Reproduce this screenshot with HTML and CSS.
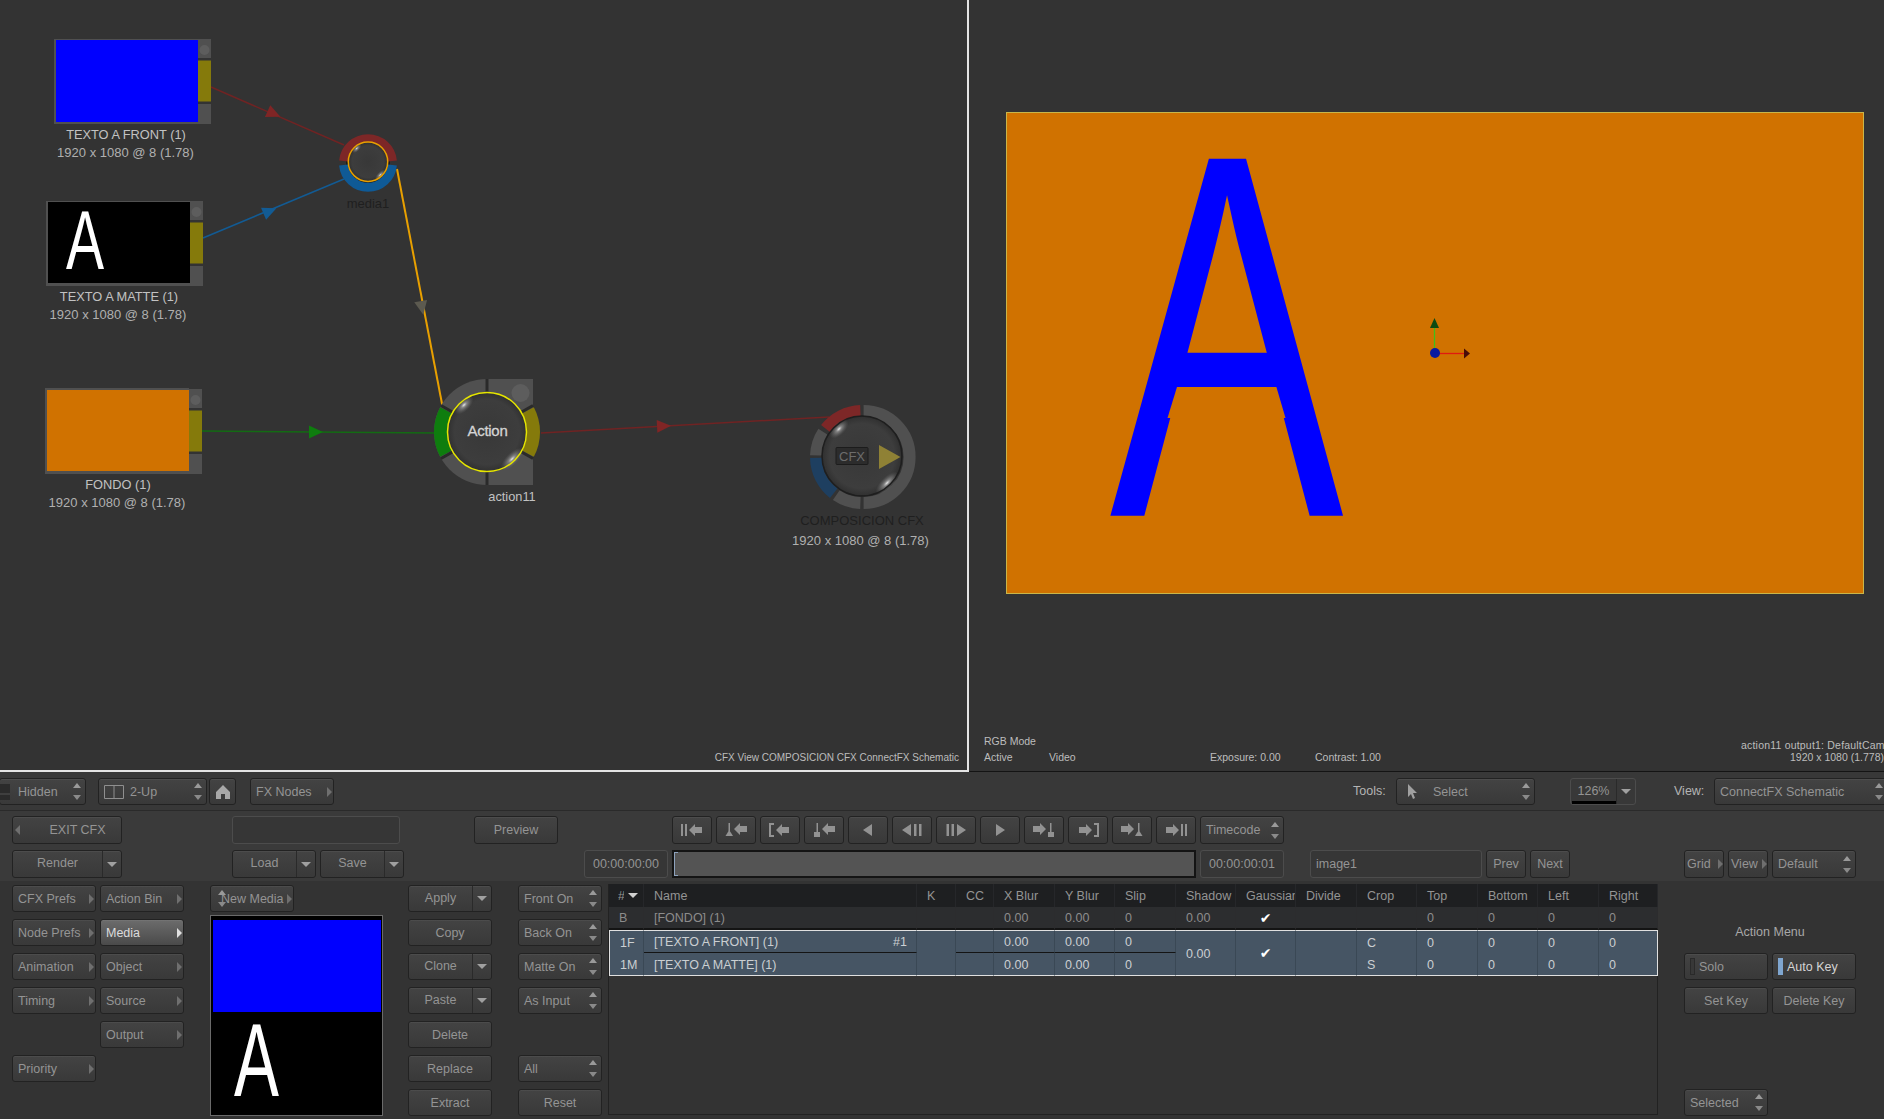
FILE: index.html
```html
<!DOCTYPE html>
<html lang="es">
<head>
    <meta charset="UTF-8">
    <title>ConnectFX Schematic</title>
    <link rel="stylesheet" href="styles.css">
</head>
<body>

<!-- shared drawings -->
<svg class="defs" width="0" height="0">
    <defs>
        <radialGradient id="ballFill" cx="50%" cy="50%" r="52%">
            <stop offset="0" stop-color="#383838"/>
            <stop offset="0.78" stop-color="#3d3d3d"/>
            <stop offset="0.93" stop-color="#323232"/>
            <stop offset="1" stop-color="#1c1c1c"/>
        </radialGradient>
        <radialGradient id="shine">
            <stop offset="0" stop-color="#f4f4f4" stop-opacity="0.95"/>
            <stop offset="0.3" stop-color="#b0b0b0" stop-opacity="0.6"/>
            <stop offset="1" stop-color="#707070" stop-opacity="0"/>
        </radialGradient>
        <g id="ball">
            <circle r="40" fill="url(#ballFill)"/>
            <ellipse cx="-23" cy="-27" rx="12" ry="6" fill="url(#shine)" transform="rotate(-45 -23 -27)"/>
            <ellipse cx="25" cy="27" rx="15" ry="6" fill="url(#shine)" transform="rotate(-45 25 27)"/>
        </g>
        <g id="thumbTab">
            <rect width="13" height="19" fill="#505050"/>
            <circle cx="6.5" cy="11" r="5" fill="#5d5d5d"/>
            <rect y="21.5" width="13" height="41" fill="#857a0b"/>
            <rect y="65" width="13" height="20" fill="#505050"/>
        </g>
    </defs>
    <symbol id="i-bars" viewBox="0 0 26 14">
        <rect x="2" y="1" width="2" height="12"/><rect x="6" y="1" width="2" height="12"/>
        <polygon points="10,7 16,1 16,4 23,4 23,10 16,10 16,13"/>
    </symbol>
    <symbol id="i-cone" viewBox="0 0 26 14">
        <rect x="5.5" y="0" width="1.5" height="8"/><polygon points="6.2,7 10,13 2.5,13"/>
        <polygon points="11,6 17,0 17,3 24,3 24,9 17,9 17,12"/>
    </symbol>
    <symbol id="i-bracket" viewBox="0 0 26 14">
        <path d="M7 1H3V13H7" fill="none" stroke="currentColor" stroke-width="2"/>
        <polygon points="9,7 15,1 15,4 22,4 22,10 15,10 15,13"/>
    </symbol>
    <symbol id="i-broom" viewBox="0 0 26 14">
        <rect x="5.5" y="0" width="1.5" height="9"/><rect x="3" y="9" width="6" height="5"/>
        <polygon points="11,6 17,0 17,3 24,3 24,9 17,9 17,12"/>
    </symbol>
    <symbol id="i-tri" viewBox="0 0 26 14">
        <polygon points="8,7 17,1 17,13"/>
    </symbol>
    <symbol id="i-tribars" viewBox="0 0 26 14">
        <polygon points="3,7 12,1 12,13"/>
        <rect x="15" y="1" width="2.5" height="12"/><rect x="20" y="1" width="2.5" height="12"/>
    </symbol>
</svg>

<div class="views">
    <div class="schematic">
        <svg class="canvas" width="967" height="770" viewBox="0 0 967 770">
            <!-- links -->
            <line x1="211" y1="87" x2="344" y2="145" stroke="#702323" stroke-width="1.5"/>
            <polygon points="-7,-6.5 7,0 -7,6.5" fill="#802525" transform="translate(274 114) rotate(24)"/>
            <line x1="203" y1="238" x2="344" y2="179" stroke="#125b94" stroke-width="1.5"/>
            <polygon points="-7,-6.5 7,0 -7,6.5" fill="#125b94" transform="translate(270 211) rotate(-23)"/>
            <line x1="397" y1="169" x2="443" y2="409" stroke="#e8a000" stroke-width="2"/>
            <polygon points="-7,-6.5 7,0 -7,6.5" fill="#5c5a50" transform="translate(422 308) rotate(79)"/>
            <line x1="202" y1="431" x2="436" y2="433" stroke="#136b13" stroke-width="1.5"/>
            <polygon points="-7,-6.5 7,0 -7,6.5" fill="#0e7d0e" transform="translate(316 432)"/>
            <line x1="541" y1="433" x2="829" y2="417" stroke="#702323" stroke-width="1.5"/>
            <polygon points="-7,-6.5 7,0 -7,6.5" fill="#802525" transform="translate(664 426) rotate(-3)"/>

            <!-- clip nodes -->
            <rect x="54" y="39" width="144" height="85" fill="#505050"/>
            <rect x="56" y="40" width="142" height="82" fill="#0000ff"/>
            <use href="#thumbTab" x="198" y="39"/>
            <text class="node-name" x="126" y="139">TEXTO A FRONT (1)</text>
            <text class="node-info" x="125.500" y="157">1920 x 1080 @ 8 (1.78)</text>

            <rect x="46" y="201" width="144" height="85" fill="#505050"/>
            <rect x="48" y="202" width="142" height="81" fill="#000000"/>
            <text class="glyph" fill="#ffffff" font-size="84" transform="translate(85 268.6) scale(0.68 1)">A</text>
            <use href="#thumbTab" x="190" y="201"/>
            <text class="node-name" x="119" y="301">TEXTO A MATTE (1)</text>
            <text class="node-info" x="118" y="319">1920 x 1080 @ 8 (1.78)</text>

            <rect x="45" y="388" width="144" height="86" fill="#505050"/>
            <rect x="47" y="390" width="142" height="81" fill="#d07200"/>
            <use href="#thumbTab" x="189" y="389"/>
            <text class="node-name" x="118" y="488.500">FONDO (1)</text>
            <text class="node-info" x="117" y="507">1920 x 1080 @ 8 (1.78)</text>

            <!-- media node -->
            <circle cx="368" cy="163" r="22" fill="#1c1c1c"/>
            <path d="M343.6 161 A24.5 24.5 0 0 1 392.4 161" fill="none" stroke="#7d2727" stroke-width="9"/>
            <path d="M343.6 165 A24.5 24.5 0 0 0 392.4 165" fill="none" stroke="#0f5a96" stroke-width="9"/>
            <use href="#ball" transform="translate(368 161.7) scale(0.49)"/>
            <circle cx="368" cy="161.7" r="19.7" fill="none" stroke="#e8a000" stroke-width="1.5"/>
            <text class="node-dim" x="368" y="208">media1</text>

            <!-- action node -->
            <path d="M487 379 A53 53 0 0 0 434 432 A53 53 0 0 0 487 485 H533 V379 Z" fill="#505050"/>
            <circle cx="520.5" cy="393" r="9" fill="#5d5d5d"/>
            <path d="M445.9 410.2 A46.5 46.5 0 0 0 445.9 453.8" fill="none" stroke="#0e7d0e" stroke-width="13"/>
            <path d="M528.1 410.2 A46.5 46.5 0 0 1 528.1 453.8" fill="none" stroke="#857a0b" stroke-width="13"/>
            <g stroke="#2a2a2a" stroke-width="3">
                <line x1="487" y1="379" x2="487" y2="392"/>
                <line x1="487" y1="472" x2="487" y2="485"/>
                <line x1="452.4" y1="412" x2="441" y2="405.5"/>
                <line x1="452.4" y1="452" x2="441" y2="458.5"/>
                <line x1="521.6" y1="412" x2="533" y2="405.5"/>
                <line x1="521.6" y1="452" x2="533" y2="458.5"/>
            </g>
            <use href="#ball" transform="translate(487 432)"/>
            <circle cx="487" cy="432" r="39.5" fill="none" stroke="#e6e600" stroke-width="1.5"/>
            <text class="ball-label" x="487.500" y="436">Action</text>
            <text class="node-name" x="512" y="501">action11</text>

            <!-- output node -->
            <g fill="none" stroke-width="12">
                <path d="M860.4 411 A46 46 0 0 0 825.8 428.7" stroke="#7d2727"/>
                <path d="M823.4 431.9 A46 46 0 0 0 816 455.4" stroke="#505050"/>
                <path d="M816 457.8 A46 46 0 0 0 833.7 493.2" stroke="#1e3f60"/>
                <path d="M836.3 495.1 A46 46 0 0 0 860.4 503" stroke="#505050"/>
                <path d="M863.6 503 A46 46 0 0 0 863.6 411" stroke="#505050"/>
            </g>
            <use href="#ball" transform="translate(862 456)"/>
            <circle cx="862" cy="456" r="40" fill="none" stroke="#1e1e1e" stroke-width="1.5"/>
            <rect class="cfx-box" x="836" y="447.5" width="32" height="17" rx="1"/>
            <text class="cfx-label" x="852" y="460.5">CFX</text>
            <polygon points="879,445 900.5,457 879,469" fill="#8f8135"/>
            <text class="node-dim" x="862" y="525">COMPOSICION CFX</text>
            <text class="node-info" x="860.500" y="545">1920 x 1080 @ 8 (1.78)</text>

            <text class="view-note small end" x="959" y="761">CFX View COMPOSICION CFX ConnectFX Schematic</text>
        </svg>
    </div>
    <div class="viewer">
        <svg class="canvas" width="915" height="771" viewBox="969 0 915 771">
            <rect x="1006.5" y="112.5" width="857" height="481" fill="#d07200" stroke="#c9b64a"/>
            <text class="glyph" fill="#0000ff" font-size="519" transform="translate(1226.7 515.7) scale(0.676 1)">A</text>
            <!-- the app's crossbar sits higher than this font's -->
            <polygon points="1181,352.7 1272,352.7 1284,380 1169,380" fill="#0000ff"/>
            <polygon points="1177,387 1276.4,387 1285.5,418 1167.500,418" fill="#d07200"/>

            <line x1="1434.5" y1="353" x2="1434.5" y2="322" stroke="#3fc01a" stroke-width="1.3"/>
            <polygon points="1430,328 1439,328 1434.5,318" fill="#0d4a12"/>
            <line x1="1435" y1="353.5" x2="1466" y2="353.5" stroke="#e01a10" stroke-width="1.3"/>
            <polygon points="1464,348.5 1464,358.5 1470,353.5" fill="#4a0d08"/>
            <ellipse cx="1435" cy="353" rx="5" ry="5" fill="#0a1aa0"/>

            <text class="view-note" x="984" y="745">RGB Mode</text>
            <text class="view-note" x="984" y="761">Active</text>
            <text class="view-note" x="1049" y="761">Video</text>
            <text class="view-note" x="1210" y="761">Exposure: 0.00</text>
            <text class="view-note" x="1315" y="761">Contrast: 1.00</text>
            <text class="view-note wide" x="1741" y="749">action11 output1: DefaultCam</text>
            <text class="view-note end" x="1884" y="761">1920 x 1080 (1.778)</text>
        </svg>
    </div>
</div>

<div class="toolbar">
    <div class="btn spin hidden-mode"><b class="pane-mark"></b><span>Hidden</span><i class="updown"></i></div>
    <div class="btn spin two-up">
        <svg class="pane-icon" width="20" height="14" viewBox="0 0 20 14"><path d="M.5.5h19v13H.5zM10 .5v13" fill="none" stroke="#8f8f8f"/></svg>
        <span>2-Up</span><i class="updown"></i>
    </div>
    <div class="btn home">
        <svg width="14" height="14" viewBox="0 0 14 14"><path d="M7 0 14 7V14H9V9H5V14H0V7Z" fill="#a8a8a8"/></svg>
    </div>
    <div class="btn menu fx-nodes"><span>FX Nodes</span><i class="arrow-r"></i></div>
    <span class="tool-label tools-label">Tools:</span>
    <div class="btn spin tool-select">
        <svg class="cursor" width="10" height="15" viewBox="0 0 10 15"><path d="M0 0V13L3 10 5 15 7 14 5 9H9Z" fill="#a0a0a0"/></svg>
        <span>Select</span><i class="updown"></i>
    </div>
    <div class="btn split zoom-level"><span class="label">126%</span><i class="drop"></i></div>
    <span class="tool-label view-label">View:</span>
    <div class="btn spin view-select"><span>ConnectFX Schematic</span><i class="updown"></i></div>
</div>

<div class="band">
    <div class="row">
        <div class="btn exit"><i class="arrow-l"></i><span>EXIT CFX</span></div>
        <div class="field name-field"></div>
        <div class="btn preview-btn">Preview</div>
        <div class="transport">
            <div class="btn tp"><svg class="ico"><use href="#i-bars"/></svg></div>
            <div class="btn tp"><svg class="ico"><use href="#i-cone"/></svg></div>
            <div class="btn tp"><svg class="ico"><use href="#i-bracket"/></svg></div>
            <div class="btn tp"><svg class="ico"><use href="#i-broom"/></svg></div>
            <div class="btn tp"><svg class="ico"><use href="#i-tri"/></svg></div>
            <div class="btn tp"><svg class="ico"><use href="#i-tribars"/></svg></div>
            <div class="btn tp"><svg class="ico flip"><use href="#i-tribars"/></svg></div>
            <div class="btn tp"><svg class="ico flip"><use href="#i-tri"/></svg></div>
            <div class="btn tp"><svg class="ico flip"><use href="#i-broom"/></svg></div>
            <div class="btn tp"><svg class="ico flip"><use href="#i-bracket"/></svg></div>
            <div class="btn tp"><svg class="ico flip"><use href="#i-cone"/></svg></div>
            <div class="btn tp"><svg class="ico flip"><use href="#i-bars"/></svg></div>
        </div>
        <div class="btn spin timecode"><span>Timecode</span><i class="updown"></i></div>
    </div>
    <div class="row">
        <div class="btn split render"><span class="label">Render</span><i class="drop"></i></div>
        <div class="btn split load"><span class="label">Load</span><i class="drop"></i></div>
        <div class="btn split save"><span class="label">Save</span><i class="drop"></i></div>
        <div class="field time time-in">00:00:00:00</div>
        <div class="scrub"><b class="in-mark"></b></div>
        <div class="field time time-out">00:00:00:01</div>
        <div class="field image-name">image1</div>
        <div class="btn prev">Prev</div>
        <div class="btn next">Next</div>
        <div class="btn menu tight grid-btn"><span>Grid</span><i class="arrow-r"></i></div>
        <div class="btn menu tight view-btn"><span>View</span><i class="arrow-r"></i></div>
        <div class="btn spin default-btn"><span>Default</span><i class="updown"></i></div>
    </div>
</div>

<div class="lower">
    <div class="col col-a">
        <div class="btn menu"><span>CFX Prefs</span><i class="arrow-r"></i></div>
        <div class="btn menu"><span>Node Prefs</span><i class="arrow-r"></i></div>
        <div class="btn menu"><span>Animation</span><i class="arrow-r"></i></div>
        <div class="btn menu"><span>Timing</span><i class="arrow-r"></i></div>
        <div class="slot"></div>
        <div class="btn menu"><span>Priority</span><i class="arrow-r"></i></div>
    </div>
    <div class="col col-b">
        <div class="btn menu"><span>Action Bin</span><i class="arrow-r"></i></div>
        <div class="btn menu active"><span>Media</span><i class="arrow-r"></i></div>
        <div class="btn menu"><span>Object</span><i class="arrow-r"></i></div>
        <div class="btn menu"><span>Source</span><i class="arrow-r"></i></div>
        <div class="btn menu"><span>Output</span><i class="arrow-r"></i></div>
    </div>
    <div class="col-media">
        <div class="btn menu new-media"><i class="updown left"></i><span>New Media</span><i class="arrow-r"></i></div>
        <div class="media-preview">
            <div class="front-swatch"></div>
            <svg class="matte-swatch" width="169" height="103" viewBox="0 0 169 103">
                <text class="glyph" fill="#ffffff" font-size="103" transform="translate(43.5 84) scale(0.655 1)">A</text>
            </svg>
        </div>
    </div>
    <div class="col col-ops">
        <div class="btn split"><span class="label">Apply</span><i class="drop"></i></div>
        <div class="btn">Copy</div>
        <div class="btn split"><span class="label">Clone</span><i class="drop"></i></div>
        <div class="btn split"><span class="label">Paste</span><i class="drop"></i></div>
        <div class="btn">Delete</div>
        <div class="btn">Replace</div>
        <div class="btn">Extract</div>
    </div>
    <div class="col col-layer">
        <div class="btn spin"><span>Front On</span><i class="updown"></i></div>
        <div class="btn spin"><span>Back On</span><i class="updown"></i></div>
        <div class="btn spin"><span>Matte On</span><i class="updown"></i></div>
        <div class="btn spin"><span>As Input</span><i class="updown"></i></div>
        <div class="slot"></div>
        <div class="btn spin"><span>All</span><i class="updown"></i></div>
        <div class="btn">Reset</div>
    </div>
    <div class="layers">
        <table>
            <colgroup>
                <col class="c-id"><col class="c-name"><col class="c-k"><col class="c-cc">
                <col class="c-wide"><col class="c-mid"><col class="c-wide"><col class="c-mid"><col class="c-mid">
                <col class="c-wide"><col class="c-mid"><col class="c-wide"><col class="c-mid"><col class="c-wide"><col class="c-last">
            </colgroup>
            <thead>
                <tr>
                    <th><span class="sharp">#</span><i class="drop sort"></i></th>
                    <th>Name</th><th>K</th><th>CC</th><th>X Blur</th><th>Y Blur</th><th>Slip</th><th>Shadow</th>
                    <th>Gaussian</th><th>Divide</th><th>Crop</th><th>Top</th><th>Bottom</th><th>Left</th><th>Right</th>
                </tr>
            </thead>
            <tbody>
                <tr class="back">
                    <td>B</td><td>[FONDO] (1)</td><td></td><td></td><td>0.00</td><td>0.00</td><td>0</td><td>0.00</td>
                    <td class="check">✔</td><td></td><td></td><td>0</td><td>0</td><td>0</td><td>0</td>
                </tr>
                <tr class="sel first">
                    <td>1F</td><td class="rule"><span class="tag">#1</span>[TEXTO A FRONT] (1)</td>
                    <td rowspan="2"></td><td class="rule"></td><td class="rule">0.00</td><td class="rule">0.00</td><td class="rule">0</td>
                    <td rowspan="2">0.00</td><td rowspan="2" class="check">✔</td><td rowspan="2"></td>
                    <td>C</td><td>0</td><td>0</td><td>0</td><td>0</td>
                </tr>
                <tr class="sel second">
                    <td>1M</td><td>[TEXTO A MATTE] (1)</td><td></td><td>0.00</td><td>0.00</td><td>0</td>
                    <td>S</td><td>0</td><td>0</td><td>0</td><td>0</td>
                </tr>
            </tbody>
        </table>
    </div>
    <div class="actions">
        <div class="action-title">Action Menu</div>
        <div class="btn led-btn"><b class="led"></b><span>Solo</span></div>
        <div class="btn led-btn on"><b class="led"></b><span>Auto Key</span></div>
        <div class="btn key-btn">Set Key</div>
        <div class="btn key-btn">Delete Key</div>
        <div class="btn spin selected-btn"><span>Selected</span><i class="updown"></i></div>
    </div>
</div>

</body>
</html>
```
FILE: styles.css
```css
* {
    box-sizing: border-box;
}

html, body {
    margin: 0;
    width: 1884px;
    height: 1119px;
    overflow: hidden;
}

body {
    background-color: #333333;
    color: #949494;
    font-family: "Liberation Sans", Arial, sans-serif;
    font-size: 12.5px;
}

.defs {
    position: absolute;
}

.canvas {
    display: block;
}

/* top views */
.views {
    display: flex;
    height: 772px;
    background-color: #333333;
}

.schematic {
    width: 969px;
    height: 772px;
    border-right: 2px solid #e4e4e4;
    border-bottom: 2px solid #e4e4e4;
}

.viewer {
    width: 915px;
    height: 772px;
    border-bottom: 1px solid #141414;
}

.node-name, .node-info, .node-dim, .ball-label, .cfx-label {
    font-family: "Liberation Sans", Arial, sans-serif;
    text-anchor: middle;
}

.node-name {
    font-size: 12.8px;
    fill: #c2c2c2;
}

.node-info {
    font-size: 13px;
    fill: #b0b0b0;
}

.node-dim {
    font-size: 13px;
    fill: #1f1f1f;
}

.ball-label {
    font-size: 15px;
    fill: #d4d4d4;
    stroke: #d4d4d4;
    stroke-width: 0.3px;
    letter-spacing: -0.3px;
}

.cfx-box {
    fill: #2c2c2c;
    stroke: #1c1c1c;
}

.cfx-label {
    font-size: 13px;
    fill: #6c6c6c;
}

.glyph {
    font-family: "Liberation Sans", Arial, sans-serif;
    text-anchor: middle;
}

.view-note {
    font-family: "Liberation Sans", Arial, sans-serif;
    font-size: 10.5px;
    fill: #bdbdbd;
}

.view-note.small {
    font-size: 10px;
}

.view-note.wide {
    letter-spacing: 0.2px;
}

.view-note.end {
    text-anchor: end;
}

/* buttons */
.btn {
    display: flex;
    flex-shrink: 0;
    align-items: center;
    justify-content: center;
    height: 27px;
    border: 1px solid #222222;
    border-radius: 3px;
    background: linear-gradient(#434343, #393939);
    box-shadow: inset 0 1px 0 rgba(255, 255, 255, 0.05);
    white-space: nowrap;
}

.btn.menu, .btn.spin, .btn.led-btn {
    justify-content: flex-start;
    padding-left: 5px;
}

.btn.menu.tight {
    padding-left: 2px;
}

.btn.active {
    background: linear-gradient(#6c6c6c, #4a4a4a);
    color: #dcdcdc;
}

.btn.active .arrow-r {
    border-left-color: #e0e0e0;
}

.arrow-r, .arrow-l {
    width: 0;
    height: 0;
    border-top: 5px solid transparent;
    border-bottom: 5px solid transparent;
}

.arrow-r {
    margin-left: auto;
    margin-right: 1px;
    border-left: 5px solid #6f6f6f;
}

.btn.menu.tight .arrow-r {
    margin-right: 0;
}

.arrow-l {
    margin-right: auto;
    margin-left: 2px;
    border-right: 5px solid #6f6f6f;
}

.updown {
    position: relative;
    flex-shrink: 0;
    width: 9px;
    height: 17px;
    margin-left: auto;
    margin-right: 3px;
}

.updown::before, .updown::after {
    content: "";
    position: absolute;
    left: 0;
    border-left: 4.5px solid transparent;
    border-right: 4.5px solid transparent;
}

.updown::before {
    top: 0;
    border-bottom: 5px solid #9a9a9a;
}

.updown::after {
    bottom: 0;
    border-top: 5px solid #8a8a8a;
}

.updown.left {
    margin: 0 -6px 0 2px;
}

.btn.split {
    padding: 0;
}

.btn.split .label {
    flex: 1;
    align-self: stretch;
    margin-right: 4px;
    border-right: 1px solid #2a2a2a;
    line-height: 25px;
    text-align: center;
}

.drop {
    display: block;
    width: 0;
    height: 0;
    border-top: 5px solid #a0a0a0;
    border-left: 5px solid transparent;
    border-right: 5px solid transparent;
}

.btn.split .drop {
    box-sizing: content-box;
    margin: 0 4px 0 0;
}

.field {
    flex-shrink: 0;
    height: 28px;
    border: 1px solid #4c4c4c;
    border-radius: 3px;
    background-color: #363636;
    line-height: 27px;
    padding-left: 5px;
}

/* first toolbar */
.toolbar {
    display: flex;
    height: 39px;
    padding-top: 6px;
    background-color: #383838;
    border-bottom: 1px solid #2a2a2a;
}

.hidden-mode {
    width: 87px;
    margin-left: -1px;
}

.pane-mark {
    width: 10px;
    height: 16px;
    margin: 0 8px 0 -5px;
    background: linear-gradient(#2b2b2b 58%, #3f3f3f 58%, #3f3f3f 66%, #2b2b2b 66%);
}

.two-up {
    width: 109px;
    margin-left: 12px;
}

.pane-icon {
    margin: 0 6px 0 0;
}

.home {
    width: 27px;
    margin-left: 2px;
}

.fx-nodes {
    width: 84px;
    margin-left: 14px;
}

.tool-label {
    flex-shrink: 0;
    line-height: 27px;
    color: #b4b4b4;
}

.tools-label {
    width: 43px;
    margin-left: 1019px;
}

.tool-select {
    width: 139px;
}

.cursor {
    margin: 0 15px 0 6px;
}

.zoom-level {
    position: relative;
    width: 66px;
    margin-left: 35px;
    border-color: #4c4c4c;
    background: #383838;
    box-shadow: none;
}

.zoom-level::after {
    content: "";
    position: absolute;
    left: 1px;
    bottom: 0;
    width: 44px;
    height: 3px;
    background-color: #000000;
}

.view-label {
    width: 40px;
    margin-left: 38px;
}

.view-select {
    width: 173px;
}

.view-select .updown {
    margin-right: 2px;
}

/* transport band */
.band {
    height: 70px;
    padding: 5px 0 0;
    background-color: #3a3a3a;
}

.row {
    display: flex;
    height: 28px;
    margin-bottom: 6px;
    padding-left: 12px;
}

.row .btn {
    height: 28px;
}

.exit, .render {
    width: 110px;
}

.exit span {
    margin-right: auto;
    margin-left: 14px;
}

.name-field {
    width: 168px;
    margin-left: 110px;
}

.preview-btn {
    width: 84px;
    margin-left: 74px;
}

.transport {
    display: flex;
    gap: 4px;
    margin-left: 114px;
}

.tp {
    width: 40px;
    color: #929292;
}

.ico {
    width: 26px;
    height: 14px;
    fill: #929292;
}

.ico.flip {
    transform: scaleX(-1);
}

.timecode {
    width: 84px;
    margin-left: 4px;
}

.load {
    width: 84px;
    margin-left: 110px;
}

.save {
    width: 84px;
    margin-left: 4px;
}

.time {
    width: 84px;
    padding: 0;
    text-align: center;
}

.time-in {
    margin-left: 180px;
}

.scrub {
    position: relative;
    flex-shrink: 0;
    width: 524px;
    height: 28px;
    margin-left: 4px;
    border: 2px solid #141414;
    background-color: #545454;
}

.in-mark {
    position: absolute;
    left: 0;
    top: 0;
    bottom: 0;
    width: 4px;
    border: 1px solid #8ea3bd;
    border-right: none;
}

.time-out {
    margin-left: 4px;
}

.image-name {
    width: 172px;
    margin-left: 26px;
}

.prev, .next {
    width: 40px;
    margin-left: 4px;
}

.grid-btn {
    width: 40px;
    margin-left: 114px;
}

.view-btn {
    width: 40px;
    margin-left: 4px;
}

.default-btn {
    width: 84px;
    margin-left: 4px;
}

/* lower panel */
.lower {
    display: flex;
    align-items: flex-start;
    height: 238px;
    padding: 4px 0 0 12px;
    background-color: #333333;
}

.col {
    display: flex;
    flex-direction: column;
    flex-shrink: 0;
    gap: 7px;
    width: 84px;
}

.slot {
    height: 27px;
}

.col-b {
    margin-left: 4px;
}

.col-media {
    flex-shrink: 0;
    width: 173px;
    margin-left: 26px;
}

.new-media {
    width: 84px;
    padding-left: 0;
}

.media-preview {
    width: 173px;
    height: 201px;
    margin-top: 3px;
    padding: 4px 1px 0 2px;
    border: 1px solid #6a6a6a;
    background-color: #000000;
}

.front-swatch {
    height: 92px;
    background-color: #0000ff;
}

.matte-swatch {
    display: block;
}

.col-ops {
    margin-left: 25px;
}

.col-layer {
    margin-left: 26px;
}

/* layers table */
.layers {
    flex-shrink: 0;
    width: 1050px;
    height: 231px;
    margin: -1px 0 0 6px;
    border-bottom: 1px solid #222222;
    border-right: 1px solid #222222;
    border-left: 1px solid #222222;
}

.layers table {
    width: 1049px;
    border-collapse: separate;
    border-spacing: 0;
    table-layout: fixed;
}

.c-id { width: 35px; }
.c-name { width: 273px; }
.c-k { width: 39px; }
.c-cc { width: 38px; }
.c-wide { width: 61px; }
.c-mid { width: 60px; }
.c-last { width: 59px; }

th, td {
    height: 23px;
    padding: 1px 0 0 10px;
    overflow: hidden;
    border-right: 1px solid #2c2c2e;
    font-weight: normal;
    text-align: left;
    white-space: nowrap;
}

th {
    padding-top: 0;
    background-color: #1e1f21;
    border-right-color: #26272a;
}

th:first-child {
    padding-left: 9px;
}

.sharp {
    display: inline-block;
    width: 6px;
    overflow: hidden;
    vertical-align: middle;
}

.sort {
    display: inline-block;
    margin-left: 4px;
    vertical-align: middle;
    border-top-color: #d0d0d0;
}

.back td {
    background-color: #2c2d2f;
    border-bottom: 2px solid #141414;
    color: #8c8c8c;
}

.back .check, .sel .check {
    padding: 0;
    color: #ffffff;
    font-family: "DejaVu Sans", sans-serif;
    font-size: 14px;
    text-align: center;
}

.sel td {
    background-color: #465564;
    color: #cbcfd2;
    border-right-color: #3a4855;
}

.sel.first td {
    border-top: 1px solid #e0e0e0;
}

.sel.first td.rule {
    border-bottom: 1px solid #141414;
}

.sel.second td {
    border-bottom: 1px solid #e0e0e0;
}

.sel td[rowspan="2"] {
    border-bottom: 1px solid #e0e0e0;
}

.sel.first td:first-child, .sel.second td:first-child {
    border-left: 1px solid #e0e0e0;
}

.sel.first td:last-child, .sel.second td:last-child {
    border-right: 1px solid #e0e0e0;
}

.tag {
    float: right;
    margin-right: 9px;
}

/* action buttons */
.actions {
    display: grid;
    flex-shrink: 0;
    grid-template-columns: 84px 84px;
    grid-auto-rows: 27px;
    gap: 7px 4px;
    margin-left: 26px;
}

.action-title {
    grid-column: 1 / 3;
    grid-row: 2;
    line-height: 27px;
    text-align: center;
    color: #a8a8a8;
}

.led-btn {
    grid-row: 3;
}

.key-btn {
    grid-row: 4;
}

.led {
    width: 5px;
    height: 17px;
    margin-right: 4px;
    background-color: #383838;
    border: 1px solid #2a2a2a;
}

.led-btn.on {
    color: #d4d4d4;
}

.led-btn.on .led {
    background-color: #7fa6d0;
    border-color: #7fa6d0;
}

.selected-btn {
    grid-row: 7;
    grid-column: 1;
}
```
